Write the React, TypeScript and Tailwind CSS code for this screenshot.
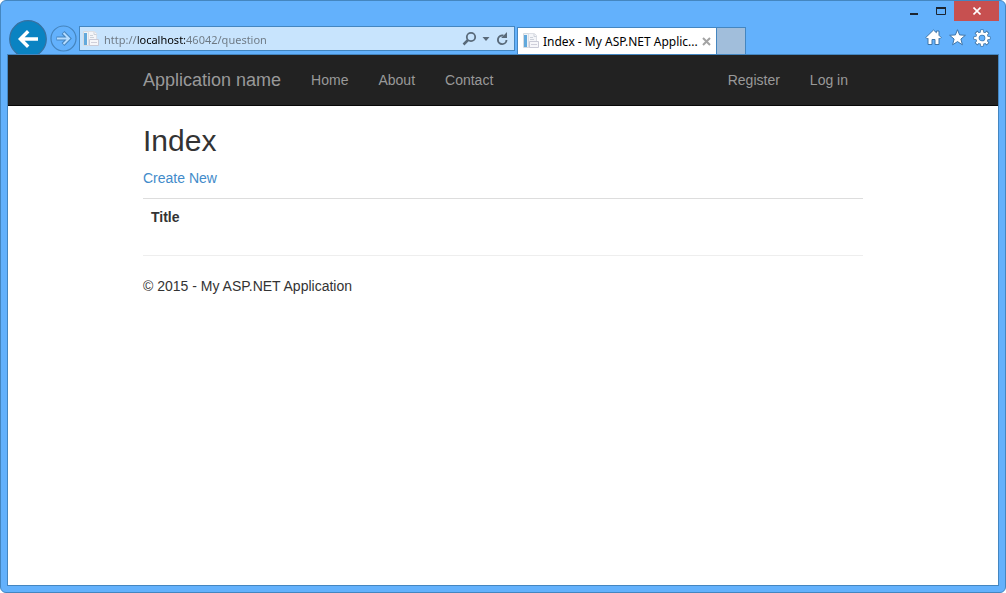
import { useState } from "react";

function PageIcon() {
  return (
    <svg width="16" height="16" viewBox="0 0 16 16" className="shrink-0" aria-hidden="true">
      <path d="M.5.5h10v14H.5z" fill="#eef3f8" stroke="#d5dae0" />
      <path d="M1 2h3v12H1z" fill="#62a9dc" />
      <path d="M5.500.5h6l2 2v12h-8z" fill="#f4f5f8" stroke="#dcdfe5" />
      <path d="M11 1v2.500h2.500M7 4.500h3M7 6.500h4" fill="none" stroke="#cdd2da" />
      <path d="M6.500 8.500h9v6h-9z" fill="#f6f6f9" stroke="#c9cad6" />
      <path d="M8 11.500h6" stroke="#cfcfda" />
    </svg>
  );
}

function BackIcon() {
  return (
    <svg width="38" height="34" viewBox="0 0 38 34" aria-hidden="true">
      <circle cx="19" cy="19" r="18.300" fill="#0a83c2" stroke="#38709f" strokeWidth="1.200" />
      <path d="M29 19H12M19.200 11.200L11.400 19l7.800 7.800" fill="none" stroke="#fff" strokeWidth="3.400" />
    </svg>
  );
}

function ForwardIcon() {
  return (
    <svg width="27" height="27" viewBox="0 0 27 27" aria-hidden="true">
      <circle cx="13.500" cy="13.500" r="12.500" fill="none" stroke="#4584bd" strokeWidth="1.200" />
      <path d="M6.500 13.500h12M13 7.500l6 6-6 6" fill="none" stroke="#4584bd" strokeWidth="4" />
      <path d="M7 13.500h11.500M13.500 8l5.500 5.500-5.500 5.500" fill="none" stroke="#b5dcff" strokeWidth="2" />
    </svg>
  );
}

function WindowControls() {
  return (
    <div className="flex h-5 shrink-0 justify-end">
      <button type="button" aria-label="Minimize" className="flex w-[27px] justify-center pt-3">
        <svg width="8" height="2" viewBox="0 0 8 2" aria-hidden="true">
          <path d="M0 0h8v2H0z" fill="#1c2530" />
        </svg>
      </button>
      <button type="button" aria-label="Maximize" className="flex w-[27px] justify-center pt-[6px]">
        <svg width="10" height="8" viewBox="0 0 10 8" aria-hidden="true">
          <path d="M.5 1h9v6.500h-9z" fill="none" stroke="#1c2530" />
          <path d="M0 0h10v2H0z" fill="#1c2530" />
        </svg>
      </button>
      <button type="button" aria-label="Close" className="mr-[6px] flex w-[45px] items-center justify-center bg-[#c75050]">
        <svg width="8" height="8" viewBox="0 0 8 8" aria-hidden="true">
          <path d="M.5.5l7 7M7.500.5l-7 7" stroke="#fff" strokeWidth="1.600" />
        </svg>
      </button>
    </div>
  );
}

function AddressBar() {
  const [url, setUrl] = useState("http://localhost:46042/question");
  return (
    <form
      className="ml-[2px] flex h-[25px] w-[436px] shrink-0 items-center border border-[#4486c0] bg-[#c8e4fd] pr-1 pl-[3px]"
      onSubmit={(event) => event.preventDefault()}
    >
      <PageIcon />
      <input
        aria-label="Address"
        spellCheck={false}
        value={url}
        onChange={(event) => setUrl(event.target.value)}
        className="ml-[5px] h-5 min-w-0 flex-1 bg-[linear-gradient(90deg,#6c7781_34px,#000_34px,#000_82px,#6c7781_82px)] bg-clip-text pt-px font-['Noto_Sans',sans-serif] text-[11px] text-transparent outline-none"
      />
      <button type="button" aria-label="Search" className="flex w-[17px] justify-center">
        <svg width="15" height="15" viewBox="0 0 15 15" aria-hidden="true">
          <circle cx="9" cy="6" r="4.200" fill="none" stroke="#596a7a" strokeWidth="1.800" />
          <path d="M6 9l-4.500 4.500" stroke="#596a7a" strokeWidth="2.500" />
        </svg>
      </button>
      <button type="button" aria-label="Show address list" className="flex w-4 justify-center">
        <svg width="8" height="4" viewBox="0 0 8 4" aria-hidden="true">
          <path d="M.5 0h7L4 4z" fill="#596a7a" />
        </svg>
      </button>
      <button type="button" aria-label="Refresh" className="flex w-4 justify-center">
        <svg width="13" height="14" viewBox="0 0 13 14" aria-hidden="true">
          <path d="M7.500 3.500H6A4.300 4.300 0 1 0 10.500 8" fill="none" stroke="#596a7a" strokeWidth="1.900" />
          <path d="M11 0v6H5.200z" fill="#596a7a" />
        </svg>
      </button>
    </form>
  );
}

function Tabs() {
  return (
    <div className="ml-[2px] flex h-[27px] shrink-0 self-end">
      <div className="flex w-[200px] items-center border border-b-0 border-[#4486c0] bg-white pr-[5px] pl-[5px]">
        <PageIcon />
        <span className="ml-[4px] min-w-0 flex-1 pt-px font-['Noto_Sans',sans-serif] text-xs whitespace-nowrap text-black">
          Index - My ASP.NET Applic...
        </span>
        <button type="button" aria-label="Close tab">
          <svg width="9" height="9" viewBox="0 0 9 9" aria-hidden="true">
            <path d="M1 1l7 7M8 1L1 8" stroke="#a3a3a3" strokeWidth="2" />
          </svg>
        </button>
      </div>
      <button type="button" aria-label="New tab" className="w-[29px] border border-b-0 border-l-0 border-[#4486c0] bg-[#a1bedb]" />
    </div>
  );
}

function GearIcon() {
  const angles = [0, 45, 90, 135, 180, 225, 270, 315];
  return (
    <svg width="18" height="18" viewBox="0 0 18 18" aria-hidden="true">
      {angles.map((angle) => (
        <path key={angle} d="M7.400 4L7.600.9h2.800l.2 3.100z" fill="#fff" stroke="#3e75a8" transform={`rotate(${angle} 9 9)`} />
      ))}
      <circle cx="9" cy="9" r="4.600" fill="none" stroke="#3e75a8" strokeWidth="4" />
      <circle cx="9" cy="9" r="4.600" fill="none" stroke="#fff" strokeWidth="2.500" />
      {angles.map((angle) => (
        <path key={angle} d="M7.800 4.500V1.300h2.400v3.200z" fill="#fff" transform={`rotate(${angle} 9 9)`} />
      ))}
    </svg>
  );
}

function BrowserTools() {
  return (
    <div className="mr-[14px] ml-auto flex h-[33px] items-center gap-[7px]">
      <button type="button" aria-label="Home">
        <svg width="17" height="17" viewBox="0 0 17 17" aria-hidden="true">
          <path
            d="M8.500 1L.8 8.500l1.400 1.400.8-.7V15.500h4v-5h3v5h4V9.200l.8.700 1.400-1.400-2.200-2.200V2h-2.600v1.700z"
            fill="#fff"
            stroke="#3e75a8"
          />
        </svg>
      </button>
      <button type="button" aria-label="Favorites">
        <svg width="17" height="17" viewBox="0 0 17 17" aria-hidden="true">
          <path d="M8.500.7l2.100 5.200 5.800.4-4.500 3.700 1.500 5.800-4.900-3.200-4.900 3.200 1.500-5.800L.6 6.300l5.800-.4z" fill="#fff" stroke="#3e75a8" />
        </svg>
      </button>
      <button type="button" aria-label="Tools">
        <GearIcon />
      </button>
    </div>
  );
}

function Navbar() {
  return (
    <nav className="border-b border-[#080808] bg-[#222222]">
      <div className="mx-auto flex h-[50px] max-w-[750px] items-center px-[15px] text-sm text-[#999999]">
        <a href="#home" className="mr-[30px] text-lg">Application name</a>
        <div className="flex gap-[30px]">
          <a href="#home">Home</a>
          <a href="#about">About</a>
          <a href="#contact">Contact</a>
        </div>
        <div className="mr-[15px] ml-auto flex gap-[30px]">
          <a href="#register">Register</a>
          <a href="#login">Log in</a>
        </div>
      </div>
    </nav>
  );
}

export default function App() {
  return (
    <div className="flex min-h-screen flex-col rounded-md border border-[#4486c0] bg-[#63b1fc] font-['Liberation_Sans',Arial,sans-serif]">
      <WindowControls />
      <header className="flex h-[33px] shrink-0 items-end pl-2">
        <button type="button" aria-label="Back" className="shrink-0"><BackIcon /></button>
        <button type="button" aria-label="Forward" className="mb-[2px] ml-[3px] shrink-0"><ForwardIcon /></button>
        <div className="flex h-full items-end pb-[3px]"><AddressBar /></div>
        <Tabs />
        <BrowserTools />
      </header>
      <div className="mx-[6px] mb-[6px] flex-1 border border-[#4486c0] bg-white text-sm text-[#333333]">
        <Navbar />
        <main className="mx-auto max-w-[750px] px-[15px]">
          <h1 className="pt-[18px] text-[30px] leading-[33px]">Index</h1>
          <p className="mt-[11px] leading-5"><a href="#create" className="text-[#428bca]">Create New</a></p>
          <table className="mt-[10px] w-full border-t border-[#dddddd] text-left">
            <tbody>
              <tr><th scope="col" className="p-2 leading-5 font-bold">Title</th></tr>
            </tbody>
          </table>
          <footer className="mt-5 border-t border-[#eeeeee] pt-5 leading-5">
            <p>&copy; 2015 - My ASP.NET Application</p>
          </footer>
        </main>
      </div>
    </div>
  );
}
